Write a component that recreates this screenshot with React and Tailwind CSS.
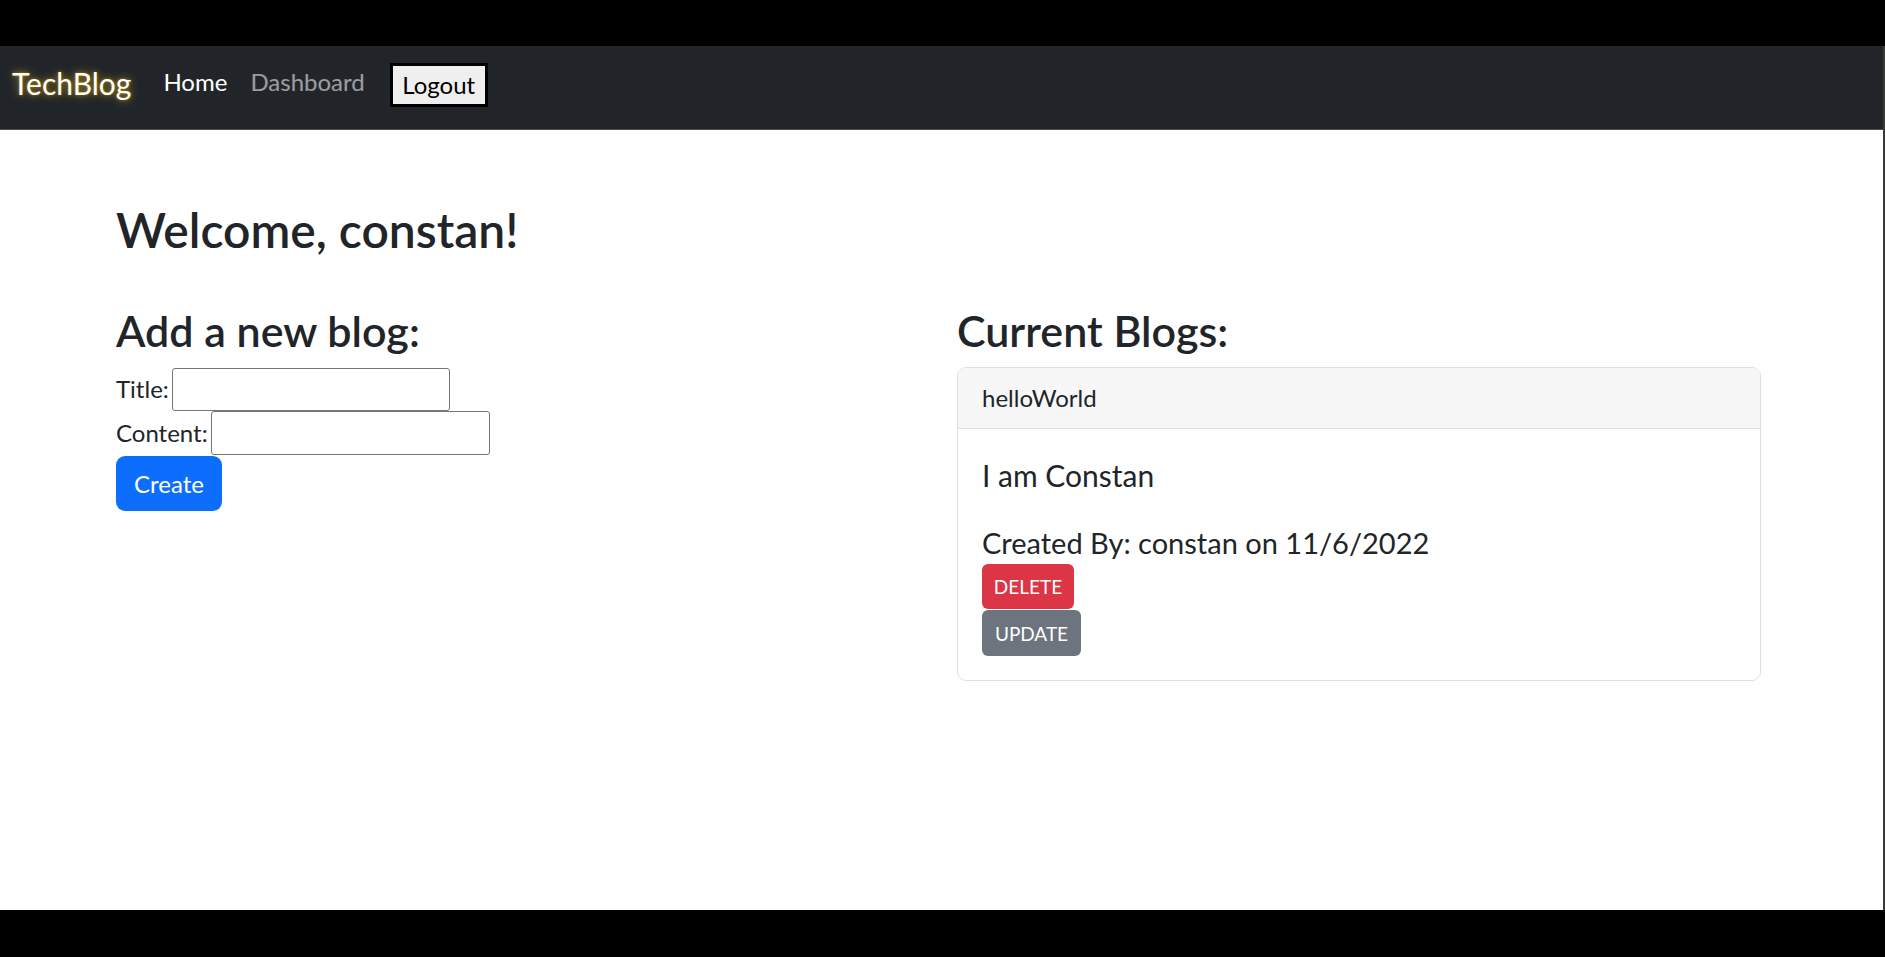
import React from "react";

export default function App() {
  return (
    <div className="w-[1885px] h-[957px] bg-black flex flex-col overflow-hidden" style={{ fontFamily: 'Lato, "Noto Sans", sans-serif' }}>
      <div className="h-[46px] shrink-0" />
      <div className="flex flex-1 min-h-0">
        <div className="w-[1883px] flex flex-col bg-white">
          <nav className="h-[84px] shrink-0 bg-[#212529] border-b border-[#4b4e52] flex items-start pl-[12px]">
            <a className="mt-[15px] text-[30px] leading-[45px] text-white [text-shadow:0_0_8px_#b8901e,0_0_3px_#8a6a10]">TechBlog</a>
            <a className="ml-[32px] mt-[18px] text-[24px] leading-[36px] text-white">Home</a>
            <a className="ml-[23px] mt-[18px] text-[24px] leading-[36px] text-white/55">Dashboard</a>
            <button className="ml-[25px] mt-[17px] h-[44px] w-[98px] border-[3px] border-black bg-[#efefef] text-[24px] leading-[36px] text-black flex items-center justify-center">Logout</button>
          </nav>
          <main className="flex-1 pl-[116px] pt-[71px] text-[#212529]">
            <h1 className="text-[48px] leading-[58px] font-semibold">Welcome, constan!</h1>
            <div className="flex mt-[47px]">
              <div className="w-[841px] shrink-0">
                <h2 className="text-[43px] leading-[50px] font-semibold mb-[11px]">Add a new blog:</h2>
                <div className="flex items-center gap-[3px] h-[44px]">
                  <label className="text-[24px] leading-[36px]">Title:</label>
                  <input className="w-[278px] h-[43px] border border-[#767676] rounded-[3px] bg-white" />
                </div>
                <div className="flex items-center gap-[3px] h-[44px]">
                  <label className="text-[24px] leading-[36px]">Content:</label>
                  <input className="w-[279px] h-[44px] border border-[#767676] rounded-[3px] bg-white" />
                </div>
                <button className="mt-[1px] h-[55px] px-[18px] rounded-[9px] bg-[#0d6efd] text-white text-[24px] leading-[36px]">Create</button>
              </div>
              <div className="w-[804px] shrink-0">
                <h2 className="text-[43px] leading-[50px] font-semibold mb-[11px]">Current Blogs:</h2>
                <div className="border border-[#dfdfdf] rounded-[9px] overflow-hidden">
                  <div className="bg-[#f7f7f7] border-b border-[#dfdfdf] px-[24px] py-[12px] text-[24px] leading-[36px]">helloWorld</div>
                  <div className="p-[24px]">
                    <h5 className="text-[30px] leading-[36px] mt-[4px] mb-[32px]">I am Constan</h5>
                    <p className="text-[29px] leading-[36px] mb-[3px]">Created By: constan on 11/6/2022</p>
                    <div className="flex flex-col items-start gap-[1px]">
                      <button className="h-[45px] w-[92px] rounded-[6px] bg-[#dc3545] text-white text-[19px] leading-[31px]">DELETE</button>
                      <button className="h-[46px] w-[99px] rounded-[6px] bg-[#6c757d] text-white text-[19px] leading-[31px]">UPDATE</button>
                    </div>
                  </div>
                </div>
              </div>
            </div>
          </main>
        </div>
        <div className="w-[2px] bg-[#3a3a3a]" />
      </div>
      <div className="h-[47px] shrink-0" />
    </div>
  );
}
